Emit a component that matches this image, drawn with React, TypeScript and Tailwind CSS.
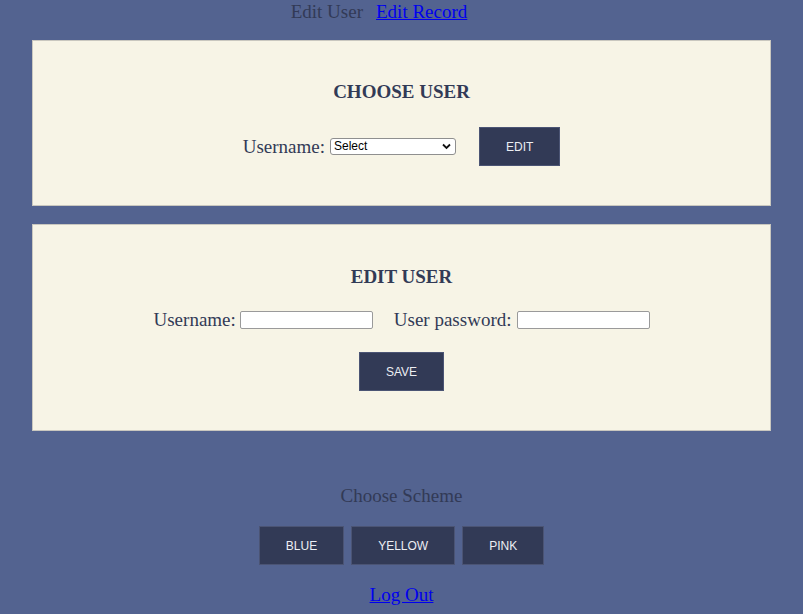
import { useState } from "react";

const serif = "font-['Liberation_Serif','Times_New_Roman',serif]";
const btn =
  "h-[39px] border border-[#4b5474] bg-[#323a56] px-[26px] font-['Liberation_Sans',Arial,sans-serif] text-[12px] text-[#eceef3]";

export default function App() {
  const [username, setUsername] = useState("");
  const [password, setPassword] = useState("");

  return (
    <div className={`min-h-screen bg-[#536390] text-[19px] leading-[22px] text-[#323a56] ${serif}`}>
      <nav className="flex h-[40px] items-start justify-center gap-[13px] pr-[45px] pt-[1px]">
        <span>Edit User</span>
        <a href="#" className="text-[#0000ee] underline">
          Edit Record
        </a>
      </nav>

      <section className="mx-[32px] flex flex-col items-center border border-[#c9c7bf] bg-[#f7f4e6] pb-[39px] pt-[40px]">
        <h2 className="font-bold">CHOOSE USER</h2>
        <div className="mt-[24px] flex items-center">
          <label>Username:</label>
          <div className="relative ml-[5px] h-[17px] w-[126px] rounded-[3px] border border-[#8f8f8f] bg-white">
            <span className="absolute left-[3px] top-0 font-['Liberation_Sans',Arial,sans-serif] text-[12px] leading-[15px] text-black">
              Select
            </span>
            <svg
              className="absolute right-[4px] top-[4px]"
              width="9"
              height="7"
              viewBox="0 0 9 7"
              fill="none"
            >
              <path d="M1 1.5 L4.5 5 L8 1.5" stroke="#111" strokeWidth="1.8" />
            </svg>
          </div>
          <button className={`${btn} ml-[23px]`}>EDIT</button>
        </div>
      </section>

      <section className="mx-[32px] mt-[18px] flex flex-col items-center border border-[#c9c7bf] bg-[#f7f4e6] pb-[39px] pt-[41px]">
        <h2 className="font-bold">EDIT USER</h2>
        <div className="mt-[21px] flex items-center">
          <label>Username:</label>
          <input
            value={username}
            onChange={(e) => setUsername(e.target.value)}
            className="ml-[4px] h-[18px] w-[133px] rounded-[2px] border border-[#9a9a9a] bg-white px-1 text-[12px] outline-none"
          />
          <label className="ml-[21px]">User password:</label>
          <input
            type="password"
            value={password}
            onChange={(e) => setPassword(e.target.value)}
            className="ml-[5px] h-[18px] w-[133px] rounded-[2px] border border-[#9a9a9a] bg-white px-1 text-[12px] outline-none"
          />
        </div>
        <button className={`${btn} mt-[21px]`}>SAVE</button>
      </section>

      <div className="flex flex-col items-center pt-[54px]">
        <p>Choose Scheme</p>
        <div className="mt-[19px] flex gap-[7px]">
          <button className={btn}>BLUE</button>
          <button className={btn}>YELLOW</button>
          <button className={btn}>PINK</button>
        </div>
        <a href="#" className="mt-[19px] text-[#0000ee] underline">
          Log Out
        </a>
      </div>
    </div>
  );
}
